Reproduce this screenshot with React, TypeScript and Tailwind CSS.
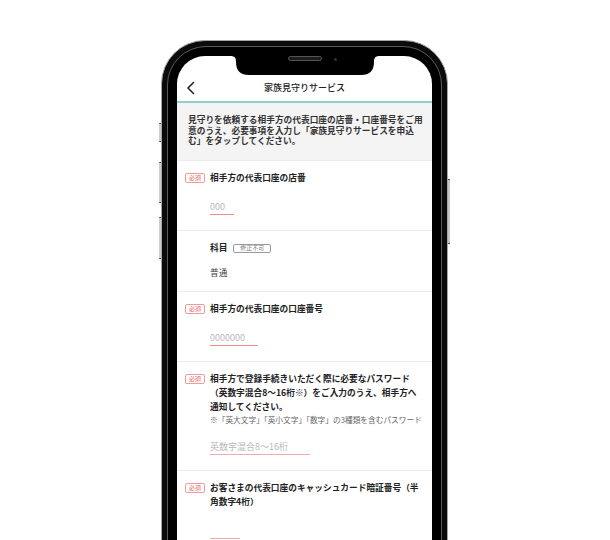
import React from 'react';

const Required = () => (
  <span className="flex h-[10px] w-[20px] items-center justify-center rounded-[2px] border border-[#f19a9a] text-[6px] leading-none text-[#e25c5c]">
    必須
  </span>
);

interface FieldProps {
  required?: boolean;
  label: React.ReactNode;
  pb?: string;
  children?: React.ReactNode;
}

const Field = ({ required, label, pb = 'pb-[15px]', children }: FieldProps) => (
  <div className={`flex gap-[5px] border-t border-[#ececec] pl-[8px] pr-[10px] pt-[10px] ${pb}`}>
    <div className="w-[20px] shrink-0 pt-[2px]">{required && <Required />}</div>
    <div className="min-w-0 flex-1">
      <div className="text-[8.7px] font-bold leading-[14px] text-[#222]">{label}</div>
      {children}
    </div>
  </div>
);

const Underlined = ({ placeholder, width, color }: { placeholder: string; width: string; color: string }) => (
  <div className={`mt-[14px] h-[16px] ${width} border-b ${color}`}>
    <input
      readOnly
      placeholder={placeholder}
      className="block h-[15px] w-full bg-transparent text-[9px] leading-[15px] outline-none placeholder:text-[#b8b8b8]"
    />
  </div>
);

export default function App() {
  return (
    <div
      className="h-[540px] w-[610px] overflow-hidden bg-white pl-[161px] pt-[40px]"
      style={{ fontFamily: '"Noto Sans CJK JP", "Noto Sans", sans-serif' }}
    >
      <div className="relative w-[287px]">
        {/* side buttons */}
        <div className="absolute -left-[2.5px] top-[83px] h-[19px] w-[2.5px] rounded-l-[1px] border-y border-[#444] bg-[#cfcfcf]" />
        <div className="absolute -left-[2.5px] top-[122px] h-[41px] w-[2.5px] rounded-l-[1px] border-y border-[#444] bg-[#cfcfcf]" />
        <div className="absolute -left-[2.5px] top-[177px] h-[42px] w-[2.5px] rounded-l-[1px] border-y border-[#444] bg-[#cfcfcf]" />
        <div className="absolute -right-[2px] top-[139px] h-[65px] w-[2px] border-y border-[#444] bg-[#c6c6c6]" />

        <div className="rounded-[44px] border-[1.5px] border-[#a5a5a5] bg-[#0b0b0b] p-[5px]">
          <div className="rounded-[39px] border border-[#5a5a5a] bg-black p-[9px]">
            <div className="relative h-[560px] overflow-hidden rounded-[28px] bg-white">
              {/* notch */}
              <svg className="absolute left-1/2 top-0 -translate-x-1/2" width="150" height="19" viewBox="0 0 150 19">
                <path d="M0 0 H150 C145 0 144 2 144 6 Q144 19 131 19 H19 Q6 19 6 6 C6 2 5 0 0 0 Z" fill="#000" />
              </svg>
              <div className="absolute left-[111px] top-[0px] h-[5px] w-[34px] rounded-full border border-[#555] bg-[#1c1c1c]" />
              <div className="absolute left-[157px] top-[2px] h-[3px] w-[3px] rounded-full bg-[#2a3440]" />

              <div className="h-[19px]" />

              {/* header */}
              <div className="grid h-[26px] grid-cols-[40px_1fr_40px] items-center">
                <svg className="ml-[9px]" width="10" height="14" viewBox="0 0 10 14">
                  <polyline points="7.5,1.5 2,7 7.5,12.5" fill="none" stroke="#222" strokeWidth="1.6" strokeLinecap="round" strokeLinejoin="round" />
                </svg>
                <div className="text-center text-[9px] font-medium text-[#222]">家族見守りサービス</div>
                <div />
              </div>
              <div className="h-[2px] bg-[#8bd2ce]" />

              {/* intro */}
              <div className="bg-[#f4f4f4] pb-[13.5px] pl-[11px] pt-[12px]">
                <p className="w-[238px] text-[8.7px] font-bold leading-[10.5px] text-[#333]">
                  見守りを依頼する相手方の代表口座の店番・口座番号をご用意のうえ、必要事項を入力し「家族見守りサービスを申込む」をタップしてください。
                </p>
              </div>

              <Field required label="相手方の代表口座の店番">
                <Underlined placeholder="000" width="w-[24px]" color="border-[#f08f80]" />
              </Field>

              <Field
                pb="pb-[11px]"
                label={
                  <div className="flex items-center gap-[6px]">
                    <span>科目</span>
                    <span className="flex h-[9px] w-[38px] items-center justify-center rounded-[2px] border border-[#9a9a9a] text-[6px] font-normal leading-none text-[#777]">
                      修正不可
                    </span>
                  </div>
                }
              >
                <div className="mt-[11px] text-[8.7px] leading-[14px] text-[#444]">普通</div>
              </Field>

              <Field required label="相手方の代表口座の口座番号">
                <Underlined placeholder="0000000" width="w-[48px]" color="border-[#f08f80]" />
              </Field>

              <Field
                required
                pb="pb-[15px]"
                label="相手方で登録手続きいただく際に必要なパスワード（英数字混合8〜16桁※）をご入力のうえ、相手方へ通知してください。"
              >
                <p className="whitespace-nowrap text-[7.7px] leading-[11px] text-[#666]">
                  ※「英大文字」「英小文字」「数字」の3種類を含むパスワード
                </p>
                <Underlined placeholder="英数字混合8〜16桁" width="w-[100px]" color="border-[#f4aaaa]" />
              </Field>

              <Field required label="お客さまの代表口座のキャッシュカード暗証番号（半角数字4桁）">
                <Underlined placeholder="" width="w-[30px]" color="border-[#f4aaaa]" />
              </Field>
            </div>
          </div>
        </div>
      </div>
    </div>
  );
}
